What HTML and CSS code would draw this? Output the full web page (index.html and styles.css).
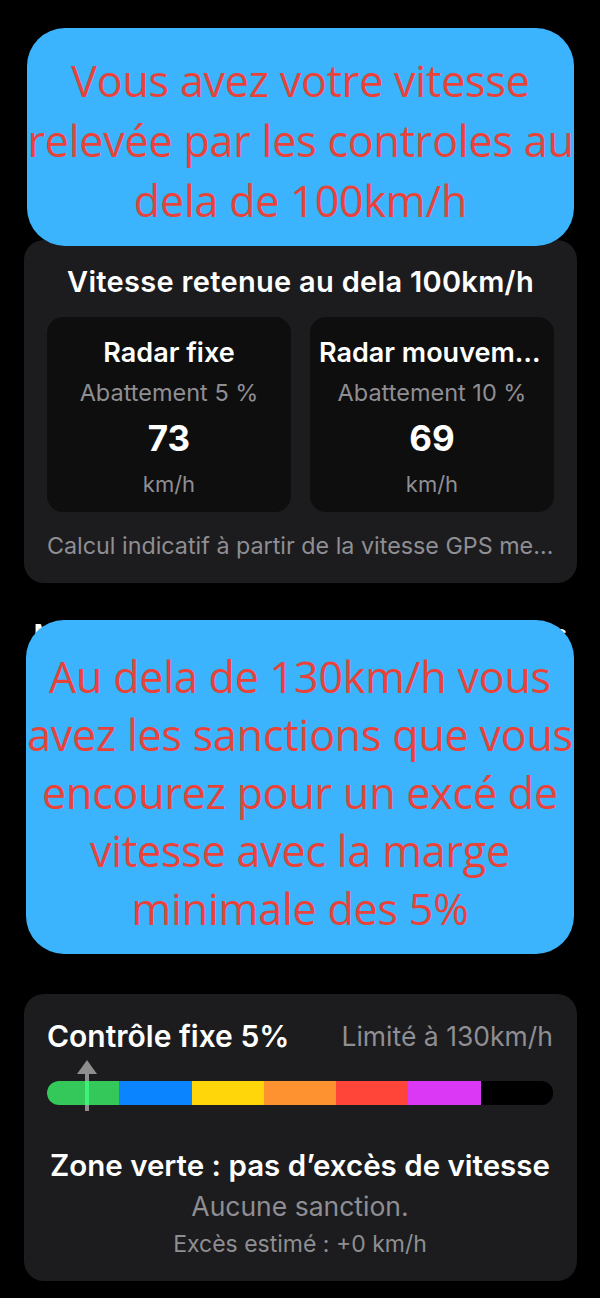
FILE: index.html
```html
<!DOCTYPE html>
<html lang="fr">
<head>
  <meta charset="UTF-8" />
  <meta name="viewport" content="width=device-width, initial-scale=1.0"/>
  <title>Vitesse retenue</title>
  <link rel="stylesheet" href="styles.css">
</head>
<body>
  <div class="page">
    <!-- bulles d'explication posées par-dessus l'écran -->
    <div class="bulle bulle-haut">
      Vous avez votre vitesse<br>relevée par les controles au<br>dela de 100km/h
    </div>
    <div class="bulle bulle-bas">
      Au dela de 130km/h vous<br>avez les sanctions que vous<br>encourez pour un excé de<br>vitesse avec la marge<br>minimale des 5%
    </div>

    <section class="carte carte-vitesse">
      <h2 class="titre">Vitesse retenue au dela 100km/h</h2>
      <div class="radars">
        <div class="radar">
          <div class="radar-nom">Radar fixe</div>
          <div class="radar-abat">Abattement 5 %</div>
          <div class="radar-val">73</div>
          <div class="radar-unite">km/h</div>
        </div>
        <div class="radar">
          <div class="radar-nom">Radar mouvement</div>
          <div class="radar-abat">Abattement 10 %</div>
          <div class="radar-val">69</div>
          <div class="radar-unite">km/h</div>
        </div>
      </div>
      <p class="note">Calcul indicatif à partir de la vitesse GPS mesurée</p>
    </section>

    <h2 class="titre-cache">Marge de tolérance et sanctions encourues</h2>

    <section class="carte carte-sanction">
      <div class="entete">
        <span class="entete-titre">Contrôle fixe 5%</span>
        <span class="entete-limite">Limité à 130km/h</span>
      </div>
      <div class="jauge">
        <div class="barre">
          <span class="seg vert"></span>
          <span class="seg bleu"></span>
          <span class="seg jaune"></span>
          <span class="seg orange"></span>
          <span class="seg rouge"></span>
          <span class="seg violet"></span>
          <span class="seg noir"></span>
        </div>
        <svg class="curseur" width="20" height="52" viewBox="0 0 20 52">
          <polygon points="10,0 0,14 20,14" fill="#8e8e8e"/>
          <rect x="8" y="13" width="4" height="38" fill="#8e8e8e"/>
          <rect x="8" y="21" width="4" height="24" fill="#3ff07c"/>
        </svg>
      </div>
      <div class="zone">Zone verte : pas d’excès de vitesse</div>
      <div class="zone-detail">Aucune sanction.</div>
      <div class="zone-exces">Excès estimé : +0 km/h</div>
    </section>
  </div>
</body>
</html>
```

FILE: styles.css
```css
body {
  background: #000;
  color: #fff;
  font-family: Inter, 'Noto Sans', sans-serif;
  margin: 0;
}
.page {
  position: relative;
  padding: 240px 23px 17px 24px;
}
.bulle {
  position: absolute;
  z-index: 2;
  background: #3bb4fd;
  color: #e8433b;
  font-family: 'Open Sans', sans-serif;
  font-size: 43px;
  letter-spacing: -0.2px;
  text-align: center;
  display: flex;
  align-items: center;
  justify-content: center;
  white-space: nowrap;
  box-sizing: border-box;
}
.bulle-haut {
  top: 28px;
  left: 27px;
  width: 547px;
  height: 218px;
  border-radius: 38px;
  line-height: 60px;
  padding-top: 8px;
}
.bulle-bas {
  top: 620px;
  left: 26px;
  width: 548px;
  height: 334px;
  border-radius: 38px;
  line-height: 58px;
  padding-top: 12px;
}
.carte {
  background: #1c1c1e;
  border-radius: 20px;
}
.carte-vitesse {
  height: 343px;
  padding: 24px 23px 0;
  box-sizing: border-box;
}
.titre {
  margin: 0;
  font-size: 29px;
  font-weight: 600;
  letter-spacing: 0.3px;
  text-align: center;
  line-height: 36px;
}
.radars {
  display: grid;
  grid-template-columns: minmax(0, 1fr) minmax(0, 1fr);
  gap: 19px;
  margin-top: 17px;
}
.radar {
  background: #0e0e0e;
  border-radius: 16px;
  height: 195px;
  padding: 20px 9px 0;
  box-sizing: border-box;
  text-align: center;
}
.radar-nom {
  font-size: 27px;
  font-weight: 600;
  line-height: 32px;
  white-space: nowrap;
  overflow: hidden;
  text-overflow: ellipsis;
}
.radar-abat {
  color: #8e8e93;
  font-size: 23.5px;
  line-height: 30px;
  margin-top: 9px;
}
.radar-val {
  font-size: 35px;
  font-weight: 700;
  line-height: 40px;
  margin-top: 10px;
}
.radar-unite {
  color: #8e8e93;
  font-size: 22px;
  line-height: 30px;
  margin-top: 11px;
}
.note {
  margin: 19px 0 0;
  color: #8e8e93;
  font-size: 23.3px;
  line-height: 30px;
  text-align: center;
  white-space: nowrap;
  overflow: hidden;
  text-overflow: ellipsis;
}
.titre-cache {
  margin: 36px 0 0;
  height: 375px;
  font-size: 25.5px;
  font-weight: 600;
  line-height: 30px;
  text-align: center;
  white-space: nowrap;
}
.carte-sanction {
  height: 287px;
  padding: 24px 24px 0 23px;
  box-sizing: border-box;
}
.entete {
  display: flex;
  justify-content: space-between;
  align-items: center;
  height: 36px;
}
.entete-titre {
  font-size: 30px;
  font-weight: 600;
}
.entete-limite {
  color: #8e8e93;
  font-size: 26.5px;
}
.jauge {
  position: relative;
  margin-top: 27px;
}
.barre {
  display: flex;
  height: 24px;
  border-radius: 12px;
  overflow: hidden;
  background: #000;
}
.seg {
  flex: 1;
}
.vert { background: #34c759; }
.bleu { background: #0a84ff; }
.jaune { background: #ffd60a; }
.orange { background: #ff9230; }
.rouge { background: #ff453a; }
.violet { background: #da38f5; }
.noir { background: #000; }
.curseur {
  position: absolute;
  left: 30px;
  top: -21px;
}
.zone {
  margin-top: 44px;
  font-size: 29.5px;
  font-weight: 600;
  text-align: center;
  line-height: 32px;
}
.zone-detail {
  margin-top: 9px;
  color: #8e8e93;
  font-size: 26.5px;
  text-align: center;
  line-height: 32px;
}
.zone-exces {
  margin-top: 8px;
  color: #8e8e93;
  font-size: 23px;
  text-align: center;
  line-height: 28px;
}
```
